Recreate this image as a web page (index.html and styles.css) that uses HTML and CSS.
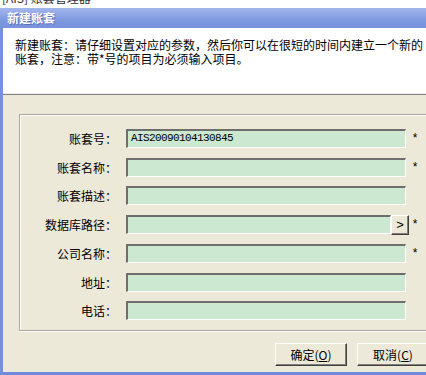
FILE: index.html
```html
<!DOCTYPE html>
<html lang="zh-CN">
<head>
    <meta charset="UTF-8">
    <title>新建账套</title>
    <link rel="stylesheet" href="styles.css">
</head>
<body>
    <div class="under">
        <span class="under-text">[AIS] 账套管理器</span>
    </div>
    <div class="window">
        <div class="titlebar">新建账套</div>
        <div class="desc">
            新建账套：请仔细设置对应的参数，然后你可以在很短的时间内建立一个新的<br>
            账套，注意：带*号的项目为必须输入项目。
        </div>
        <div class="content">
            <div class="groupbox">
                <div class="form">
                    <label class="label">账套号：</label>
                    <div class="field">AIS20090104130845</div>
                    <span class="req">*</span>

                    <label class="label">账套名称：</label>
                    <div class="field"></div>
                    <span class="req">*</span>

                    <label class="label">账套描述：</label>
                    <div class="field"></div>
                    <span class="req"></span>

                    <label class="label">数据库路径：</label>
                    <div class="field-browse">
                        <div class="field"></div>
                        <button class="browse">&gt;</button>
                    </div>
                    <span class="req">*</span>

                    <label class="label">公司名称：</label>
                    <div class="field"></div>
                    <span class="req">*</span>

                    <label class="label">地址：</label>
                    <div class="field"></div>
                    <span class="req"></span>

                    <label class="label">电话：</label>
                    <div class="field"></div>
                    <span class="req"></span>
                </div>
            </div>
            <div class="buttons">
                <button class="btn">确定(<u>O</u>)</button>
                <button class="btn">取消(<u>C</u>)</button>
            </div>
        </div>
    </div>
</body>
</html>
```

FILE: styles.css
```css
body {
    margin: 0;
    width: 426px;
    height: 375px;
    overflow: hidden;
    background: #ffffff;
    font-family: "Noto Sans CJK SC", "Liberation Sans", sans-serif;
    font-size: 12px;
    color: #000000;
}
.under {
    height: 8px;
    overflow: hidden;
    background: #ffffff;
}
.under-text {
    display: block;
    margin-top: -9px;
    padding-left: 2px;
    font-size: 12px;
    line-height: 14px;
    color: #303030;
}
.window {
    width: 460px;
    border-left: 3px solid #7590dc;
    border-bottom: 3px solid #6f8ad8;
}
.titlebar {
    height: 20px;
    margin-left: -3px;
    padding-left: 7px;
    line-height: 20px;
    font-weight: bold;
    color: #ffffff;
    text-shadow: 1px 1px 0 #5b73b8;
    background: linear-gradient(#a3b7ec, #7f99e0 60%, #7791dc);
}
.desc {
    height: 55px;
    padding: 10px 0 0 12px;
    line-height: 14px;
    background: #ffffff;
    border-bottom: 1px solid #f0f0f0;
}
.content {
    background: #ece9d8;
    border-top: 1px solid #808080;
    padding: 19px 0 6px 16px;
    display: flex;
    flex-direction: column;
}
.groupbox {
    width: 440px;
    border: 1px solid #aca899;
    box-shadow: inset 1px 1px 0 #ffffff, 1px 1px 0 #ffffff;
    padding: 14px 0 10px 0;
}
.form {
    display: grid;
    grid-template-columns: 97px 283px 12px;
    column-gap: 9px;
    row-gap: 9.5px;
    align-items: center;
}
.label {
    text-align: right;
    line-height: 19px;
}
.field {
    box-sizing: border-box;
    width: 280px;
    height: 19px;
    padding-left: 3px;
    background: #cce8d0;
    border-top: 2px solid #6e6e6e;
    border-left: 2px solid #6e6e6e;
    border-bottom: 1px solid #ffffff;
    border-right: 1px solid #ffffff;
    font-family: "Liberation Mono", monospace;
    font-size: 11px;
    letter-spacing: -0.6px;
    line-height: 15px;
}
.field-browse {
    display: flex;
    align-items: center;
}
.field-browse .field {
    width: 265px;
}
.browse {
    box-sizing: border-box;
    width: 18px;
    height: 20px;
    padding: 0;
    margin: 0;
    background: #ece9d8;
    border-top: 1px solid #ffffff;
    border-left: 1px solid #ffffff;
    border-bottom: 1px solid #404040;
    border-right: 1px solid #404040;
    box-shadow: inset -1px -1px 0 #808080;
    font-family: "Liberation Sans", sans-serif;
    font-size: 13px;
    color: #000000;
}
.req {
    justify-self: start;
    width: 12px;
    margin-left: -9px;
    text-align: center;
    font-family: "Liberation Sans", sans-serif;
    font-size: 12px;
    line-height: 19px;
}
.buttons {
    display: flex;
    gap: 10px;
    margin-top: 12px;
    padding-left: 256px;
}
.btn {
    box-sizing: border-box;
    width: 72px;
    height: 23px;
    padding: 0;
    background: #ece9d8;
    border-top: 1px solid #ffffff;
    border-left: 1px solid #ffffff;
    border-bottom: 1px solid #404040;
    border-right: 1px solid #404040;
    box-shadow: inset -1px -1px 0 #808080;
    font-family: "Noto Sans CJK SC", sans-serif;
    font-size: 12px;
    color: #000000;
}
```
